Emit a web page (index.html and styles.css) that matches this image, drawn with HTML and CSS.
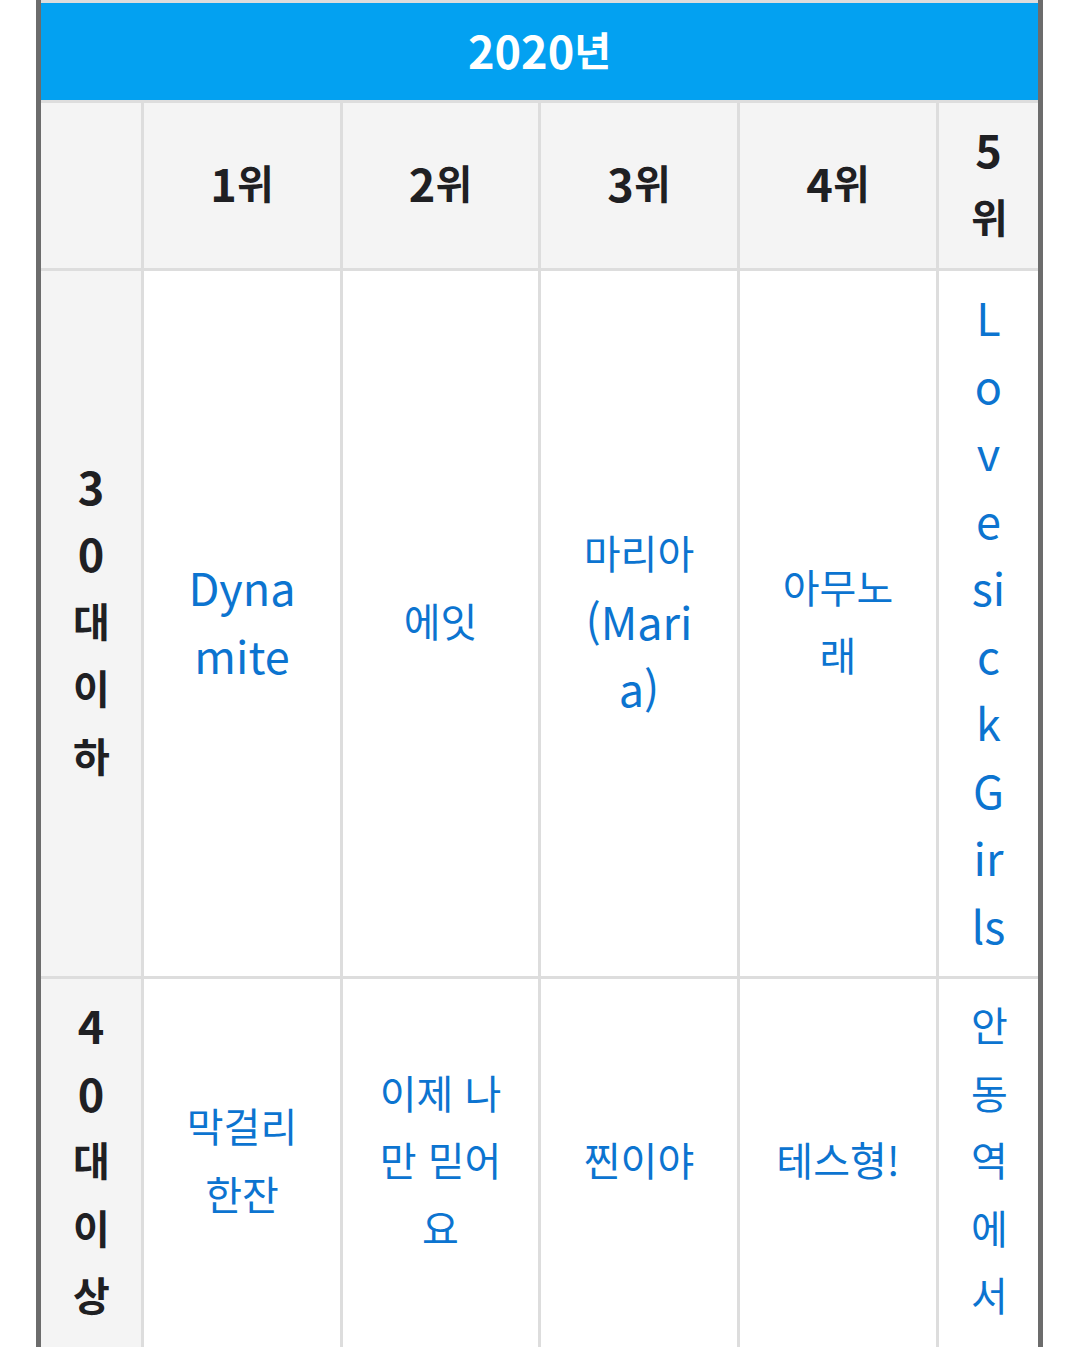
FILE: index.html
```html
<!DOCTYPE html>
<html lang="ko">
<head>
<meta charset="utf-8">
<title>2020년 순위</title>
<link rel="stylesheet" href="styles.css">
</head>
<body>
<div class="frame">
  <div class="rank">
    <div class="title"><span class="txt"><span class="lat">2020</span>년</span></div>

    <div class="cell head"></div>
    <div class="cell head"><span class="txt"><span class="lat">1</span>위</span></div>
    <div class="cell head"><span class="txt"><span class="lat">2</span>위</span></div>
    <div class="cell head"><span class="txt"><span class="lat">3</span>위</span></div>
    <div class="cell head"><span class="txt"><span class="lat">4</span>위</span></div>
    <div class="cell head"><span class="txt"><span class="lat">5</span>위</span></div>

    <div class="cell head"><span class="txt"><span class="lat">30</span>대이하</span></div>
    <div class="cell"><a class="song lat-all" href="#">Dynamite</a></div>
    <div class="cell"><a class="song" href="#">에잇</a></div>
    <div class="cell"><a class="song" href="#">마리아<span class="lat">(Maria)</span></a></div>
    <div class="cell"><a class="song" href="#">아무노래</a></div>
    <div class="cell"><a class="song lat-all" href="#">Lovesick Girls</a></div>

    <div class="cell head"><span class="txt"><span class="lat">40</span>대이상</span></div>
    <div class="cell"><a class="song" href="#">막걸리 한잔</a></div>
    <div class="cell"><a class="song" href="#">이제 나만 믿어요</a></div>
    <div class="cell"><a class="song" href="#">찐이야</a></div>
    <div class="cell"><a class="song" href="#">테스형!</a></div>
    <div class="cell"><a class="song" href="#">안동역에서</a></div>
  </div>
</div>
</body>
</html>
```

FILE: styles.css
```css
html, body {
  margin: 0;
  padding: 0;
  background: #ffffff;
}

body {
  font-family: "Noto Sans CJK KR", "Noto Sans", sans-serif;
  font-size: 40px;
  line-height: 67.5px;
  color: #222326;
}

.frame {
  margin-left: 36px;
  width: 1007px;
  box-sizing: border-box;
  border-left: 5px solid #6c6c6c;
  border-right: 5px solid #6c6c6c;
}

.rank {
  display: grid;
  grid-template-columns: 100px 196px 195px 196px 196px 99px;
  gap: 3px;
  padding-top: 3px;
  background: #dddddd;
}

.lat {
  font-size: 45px;
  line-height: 67.5px;
  vertical-align: top;
}

.lat-all {
  font-size: 45px;
}

.title {
  grid-column: 1 / -1;
  box-sizing: border-box;
  height: 97px;
  padding-bottom: 4px;
  display: flex;
  align-items: center;
  justify-content: center;
  background: #03a1f1;
  color: #ffffff;
  font-weight: 700;
}

.cell {
  display: flex;
  align-items: center;
  justify-content: center;
  padding: 12px 32px 18px;
  background: #ffffff;
  text-align: center;
  word-break: break-all;
  min-width: 0;
}

.txt,
.song {
  display: block;
  min-width: 0;
  max-width: 100%;
}

.cell.head {
  background: #f4f4f4;
  font-weight: 700;
  color: #1f2023;
}

.song {
  color: #0c74d0;
  text-decoration: none;
}
```
